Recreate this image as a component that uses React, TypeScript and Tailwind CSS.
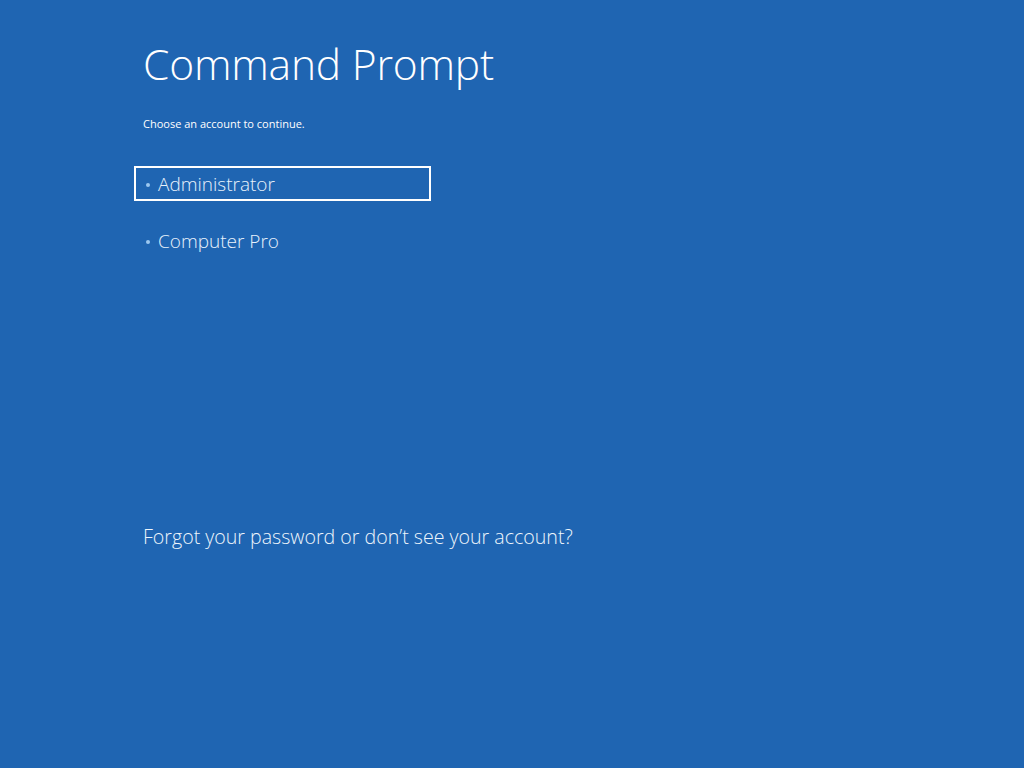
export default function App() {
  const accounts = ['Administrator', 'Computer Pro'];

  return (
    <div
      className="w-[1024px] h-[768px] bg-[#1f65b2] text-white overflow-hidden"
      style={{ fontFamily: '"Open Sans", "Noto Sans", sans-serif' }}
    >
      <div className="pl-[143px] pt-[36px]">
        {/* Title */}
        <h1 className="text-[42.5px] font-light leading-[56px] tracking-[-0.2px]">Command Prompt</h1>

        <p className="mt-[25px] text-[11px] leading-[14px]">Choose an account to continue.</p>

        {/* Accounts */}
        <div className="mt-[35px] -ml-[9px] flex flex-col gap-[22px]">
          {accounts.map((name, i) => (
            <div
              key={name}
              className={`w-[297px] h-[35px] flex items-center pl-[10px] pt-[2px] border-2 ${
                i === 0 ? 'border-white' : 'border-transparent'
              }`}
            >
              <span className="w-[4px] h-[4px] rounded-full bg-[#9cc8f0] mr-[8px]" />
              <span className="text-[19px] font-light leading-none text-[#e8f2fc]">{name}</span>
            </div>
          ))}
        </div>

        {/* Footer link */}
        <p className="mt-[267px] text-[19.6px] font-light leading-[24px] text-[#eef5fc]">
          Forgot your password or don’t see your account?
        </p>
      </div>
    </div>
  );
}
